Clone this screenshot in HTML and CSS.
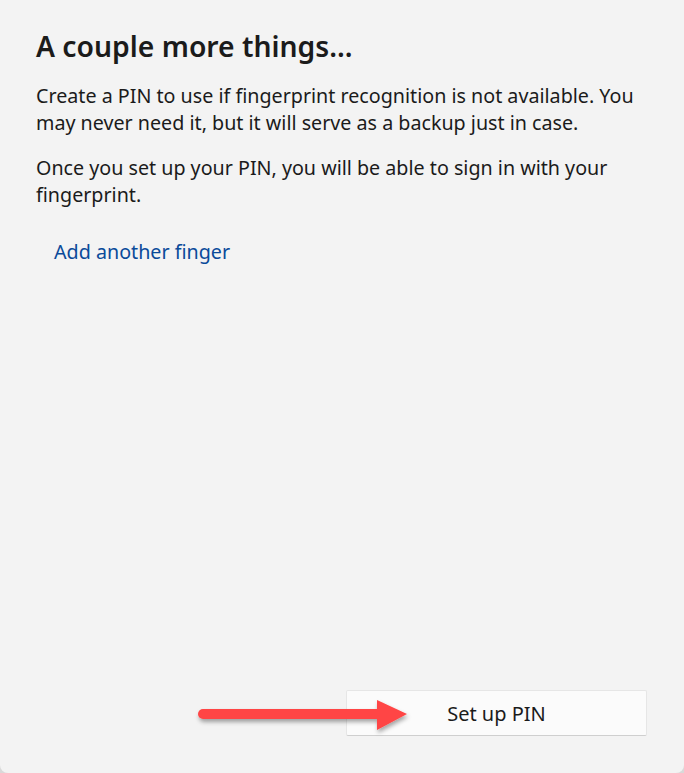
FILE: index.html
```html
<!DOCTYPE html>
<html lang="en">
<head>
<meta charset="utf-8">
<title>A couple more things</title>
<link rel="stylesheet" href="styles.css">
</head>
<body>
<div class="window">
  <div class="content">
    <h1 class="title">A couple more things...</h1>
    <p class="text">Create a PIN to use if fingerprint recognition is not available. You may never need it, but it will serve as a backup just in case.</p>
    <p class="text">Once you set up your PIN, you will be able to sign in with your fingerprint.</p>
    <a class="link" href="#">Add another finger</a>
  </div>
  <div class="footer">
    <button class="btn" type="button">Set up PIN</button>
    <svg class="arrow" width="230" height="60" viewBox="0 0 230 60" aria-hidden="true">
      <defs>
        <filter id="sh" x="-10%" y="-40%" width="120%" height="180%">
          <feDropShadow dx="1" dy="3" stdDeviation="2" flood-color="#000" flood-opacity="0.35"/>
        </filter>
      </defs>
      <g filter="url(#sh)">
        <line x1="10" y1="35" x2="188" y2="35" stroke="#ff4444" stroke-width="10" stroke-linecap="round"/>
        <polygon points="184,21 214,35 184,51" fill="#ff4444"/>
      </g>
    </svg>
  </div>
</div>
</body>
</html>
```
FILE: styles.css
```css
html, body {
  margin: 0;
  padding: 0;
  background: #d9d9d9;
}
.window {
  width: 684px;
  height: 773px;
  box-sizing: border-box;
  background: #f3f3f3;
  border-radius: 0 0 8px 8px;
  display: flex;
  flex-direction: column;
  font-family: "Noto Sans", "Open Sans", sans-serif;
  color: #1b1b1b;
  position: relative;
}
.content {
  flex: 1;
  padding: 28px 36px 0 36px;
}
.title {
  margin: 0 0 18px 0;
  font-size: 28.3px;
  line-height: 36px;
  font-weight: 600;
}
.text {
  margin: 0 0 18px 0;
  font-size: 19.7px;
  line-height: 27px;
}
.link {
  display: inline-block;
  margin: 12px 0 0 18px;
  font-size: 19.7px;
  line-height: 27px;
  color: #0a4a9a;
  text-decoration: none;
}
.footer {
  display: flex;
  justify-content: flex-end;
  padding: 0 37px 37px 0;
  position: relative;
}
.btn {
  width: 301px;
  height: 46px;
  background: #fbfbfb;
  border: 1px solid #e6e6e6;
  border-bottom-color: #cfcfcf;
  border-radius: 2px;
  font-family: "Noto Sans", "Open Sans", sans-serif;
  font-size: 20px;
  color: #1b1b1b;
  padding: 0;
}
.arrow {
  position: absolute;
  left: 193px;
  top: -11px;
}
```
